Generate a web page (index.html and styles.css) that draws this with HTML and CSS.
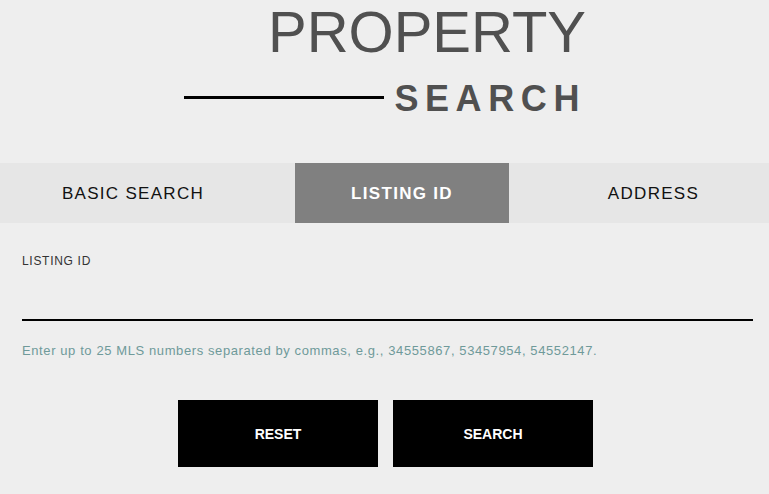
FILE: index.html
```html
<!DOCTYPE html>
<html>
<head>
    <meta charset="UTF-8">
    <meta name="viewport" content="width=device-width, initial-scale=1.0">
    <title>Property Search</title>
    <link rel="stylesheet" href="styles.css">
</head>
<body>
    <div class="title">
        <div class="title-box">
            <div class="title-top">PROPERTY</div>
            <div class="title-bottom">
                <span class="title-line"></span>
                <span class="title-sub">SEARCH</span>
            </div>
        </div>
    </div>

    <div class="tabs">
        <a href="#" class="tab tab-first">BASIC SEARCH</a>
        <a href="#" class="tab active">LISTING ID</a>
        <a href="#" class="tab tab-last">ADDRESS</a>
    </div>

    <form class="search-form">
        <label for="listingId">LISTING ID</label>
        <input type="text" id="listingId">
        <p class="hint">Enter up to 25 MLS numbers separated by commas, e.g., 34555867, 53457954, 54552147.</p>
        <div class="buttons">
            <button type="reset">RESET</button>
            <button type="submit">SEARCH</button>
        </div>
    </form>
</body>
</html>
```

FILE: styles.css
```css
/* page */
body {
    margin: 0;
    padding: 0;
    background-color: #eeeeee;
    font-family: "Liberation Sans", Arial, sans-serif;
}

.title {
    display: flex;
    justify-content: center;
    padding-top: 2px;
}

.title-box {
    width: 402px;
    margin-left: 1px;
}

.title-top {
    text-align: right;
    font-size: 58px;
    line-height: 60px;
    color: #505050;
}

.title-bottom {
    display: flex;
    align-items: center;
    margin-top: 17px;
}

.title-line {
    width: 202px;
    height: 3px;
    background-color: #000;
    margin-right: 10px;
    margin-bottom: 4px;
}

.title-sub {
    font-size: 36px;
    line-height: 40px;
    font-weight: bold;
    letter-spacing: 6.6px;
    color: #505050;
}

.tabs {
    display: grid;
    grid-template-columns: 295px 214px 1fr;
    margin-top: 44px;
    background-color: #e6e6e6;
}

.tab {
    height: 60px;
    display: flex;
    align-items: center;
    justify-content: center;
    padding-top: 2px;
    box-sizing: border-box;
    text-decoration: none;
    color: #111;
    font-size: 17px;
    letter-spacing: 1.3px;
}

.tab-first {
    padding-right: 29px;
}

.tab-last {
    padding-left: 29px;
}

.tab.active {
    background-color: #808080;
    color: #fff;
    font-weight: bold;
}

.search-form {
    padding: 0 16px 0 22px;
}

label {
    display: block;
    margin-top: 31px;
    font-size: 12px;
    letter-spacing: 0.7px;
    color: #333;
}

input[type="text"] {
    display: block;
    width: 100%;
    box-sizing: border-box;
    height: 45px;
    margin-top: 8px;
    border: none;
    border-bottom: 2px solid #000;
    background: transparent;
    outline: none;
}

.hint {
    margin: 22px 0 0;
    font-size: 13px;
    letter-spacing: 0.6px;
    color: #6f9a9a;
}

.buttons {
    display: flex;
    justify-content: center;
    gap: 15px;
    margin-top: 42px;
    margin-left: -4px;
}

button {
    width: 200px;
    height: 67px;
    background-color: #000;
    color: #fff;
    border: none;
    font-family: "Liberation Sans", Arial, sans-serif;
    font-size: 14px;
    font-weight: bold;
    cursor: pointer;
}
```
